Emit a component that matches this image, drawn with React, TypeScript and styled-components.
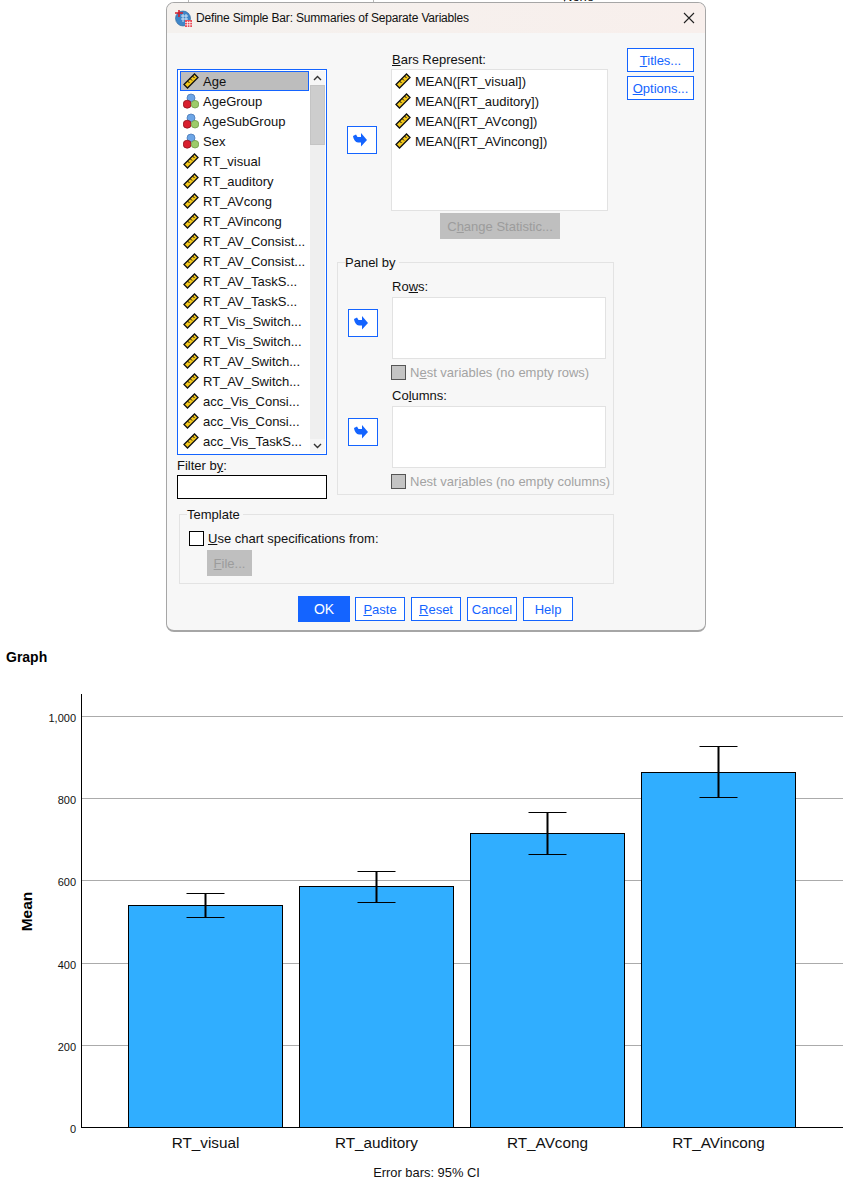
import React from "react";
import styled, { createGlobalStyle } from "styled-components";

const BLUE = "#1464ff";

const GlobalStyle = createGlobalStyle`
  * { box-sizing: border-box; }
  html, body { margin: 0; padding: 0; background: #fff; }
  body {
    font-family: "Liberation Sans", Arial, sans-serif;
    font-size: 13px;
    line-height: 15px;
    color: #111;
  }
`;

const Page = styled.div`
  width: 844px;
  height: 1186px;
  overflow: hidden;
`;

// the sliver of the output window that shows above the dialog
const Backdrop = styled.div`
  display: flex;
  height: 2px;
  overflow: hidden;
`;

const BackdropCell = styled.div<{ $width: number }>`
  width: ${(p) => p.$width}px;
  height: 2px;
  border-right: 1px solid #b8b8b8;
`;

const Peek = styled.span`
  display: block;
  margin: -10px 0 0 -2px;
  font-size: 13px;
  line-height: 13px;
`;

const Dialog = styled.div`
  width: 540px;
  height: 630px;
  margin-left: 166px;
  background: #f7f7f7;
  border: 1px solid #a6a6a6;
  border-bottom-width: 2px;
  border-radius: 8px;
  overflow: hidden;
`;

const TitleBar = styled.div`
  display: flex;
  align-items: center;
  height: 30px;
  padding: 0 10px 0 8px;
  background: linear-gradient(90deg, #f4f1ee, #f8efec);
`;

const TitleText = styled.span`
  flex: 1;
  margin-left: 4px;
  font-size: 12px;
  letter-spacing: -0.18px;
`;

const Body = styled.div`
  padding: 19px 0 0 10px;
`;

const Columns = styled.div`
  display: flex;
  height: 447px;
`;

const LeftColumn = styled.div`
  width: 150px;
  padding-top: 17px;
`;

const CenterColumn = styled.div`
  width: 277px;
  margin-left: 10px;
`;

const RightColumn = styled.div`
  display: flex;
  flex-direction: column;
  gap: 4px;
  width: 67px;
  margin: -4px 0 0 13px;
`;

const VariableBox = styled.div`
  display: flex;
  height: 386px;
  padding: 1px 1px 1px 2px;
  background: #fff;
  border: 1px solid ${BLUE};
`;

const VariableRows = styled.div`
  width: 129px;
`;

const Row = styled.div<{ $selected?: boolean }>`
  display: flex;
  align-items: center;
  gap: 4px;
  height: 20px;
  padding-left: 3px;
  white-space: nowrap;
  background: ${(p) => (p.$selected ? "#bdbdbd" : "transparent")};
  outline: ${(p) => (p.$selected ? `1px solid ${BLUE}` : "none")};
  outline-offset: -1px;
`;

const Scrollbar = styled.div`
  display: flex;
  flex-direction: column;
  width: 15px;
  margin-left: 1px;
  background: #efefef;
`;

const ScrollButton = styled.div`
  display: flex;
  align-items: center;
  justify-content: center;
  height: 14px;
  background: #f6f6f6;
`;

const ScrollThumb = styled.div`
  height: 60px;
  background: #cdcdcd;
  border: 1px solid #c4c4c4;
`;

const ScrollTrack = styled.div`
  flex: 1;
`;

const FilterLabel = styled.div`
  margin-top: 3px;
`;

const FilterInput = styled.div`
  height: 24px;
  margin-top: 2px;
  background: #fff;
  border: 1px solid #000;
`;

const UpperRow = styled.div`
  display: flex;
  padding-left: 10px;
`;

const ArrowButton = styled.button<{ $top: number }>`
  display: flex;
  align-items: center;
  justify-content: center;
  flex: none;
  width: 30px;
  height: 28px;
  margin-top: ${(p) => p.$top}px;
  padding: 0 4px 0 0;
  background: #fff;
  border: 1px solid ${BLUE};
`;

const BarsField = styled.div`
  width: 217px;
  margin-left: 14px;
`;

const FieldLabel = styled.div`
  height: 15px;
`;

const BarsLabel = styled(FieldLabel)`
  padding-left: 1px;
`;

const BarsList = styled.div`
  height: 142px;
  margin-top: 2px;
  padding-top: 1px;
  background: #fff;
  border: 1px solid #e2e2e2;
`;

const DisabledButton = styled.button<{ $width: number; $height: number }>`
  display: block;
  width: ${(p) => p.$width}px;
  height: ${(p) => p.$height}px;
  padding: 0;
  font: inherit;
  color: #9c9c9c;
  background: #bfbfbf;
  border: none;
`;

const ChangeStatistic = styled(DisabledButton)`
  margin: 2px 0 0 49px;
`;

const Group = styled.fieldset`
  min-width: 0;
  margin: 0;
  border: 1px solid #e3e3e3;
`;

const GroupLegend = styled.legend<{ $inset: number }>`
  padding: 0 3px 0 0;
  margin-left: ${(p) => p.$inset}px;
  line-height: 15px;
`;

const PanelGroup = styled(Group)`
  width: 277px;
  height: 240px;
  margin-top: 16px;
  padding: 9px 0 0 10px;
`;

const PanelRow = styled.div`
  display: flex;
  & + & {
    margin-top: 8px;
  }
`;

const PanelField = styled.div`
  width: 214px;
  margin-left: 14px;
`;

const PanelList = styled.div`
  height: 62px;
  margin-top: 3px;
  background: #fff;
  border: 1px solid #e2e2e2;
`;

const CheckRow = styled.div`
  display: flex;
  align-items: center;
  gap: 4px;
  height: 15px;
  margin: 6px 0 0 -1px;
  color: #a3a3a3;
  white-space: nowrap;
`;

const CheckBox = styled.span<{ $disabled?: boolean }>`
  flex: none;
  width: 15px;
  height: 15px;
  background: ${(p) => (p.$disabled ? "#c4c4c4" : "#fff")};
  border: 1px solid ${(p) => (p.$disabled ? "#555" : "#000")};
`;

const TemplateGroup = styled(Group)`
  width: 435px;
  height: 77px;
  margin: 8px 0 0 2px;
  padding: 8px 0 0 9px;
`;

const TemplateCheck = styled.div`
  display: flex;
  align-items: center;
  gap: 4px;
  height: 16px;
`;

const FileButton = styled(DisabledButton)`
  margin: 4px 0 0 18px;
`;

const Footer = styled.div`
  display: flex;
  align-items: center;
  gap: 6px;
  height: 26px;
  margin: 12px 0 0 121px;
`;

const ActionButton = styled.button<{ $width: number }>`
  width: ${(p) => p.$width}px;
  height: 24px;
  padding: 0;
  font: inherit;
  color: ${BLUE};
  background: #fff;
  border: 1px solid ${BLUE};
`;

const OkButton = styled(ActionButton)`
  height: 26px;
  margin-right: -1px;
  font-size: 14px;
  color: #fff;
  background: ${BLUE};
`;

const Heading = styled.h2`
  margin: 18px 0 15px 6px;
  font-size: 14px;
  font-weight: 700;
  line-height: 15px;
  color: #000;
`;

const ChartSvg = styled.svg`
  display: block;
`;

const RulerIcon = () => (
  <svg width="16" height="16" viewBox="0 0 16 16" style={{ flex: "none" }}>
    <path d="M1 11.5 11.5 1 15 4.5 4.5 15Z" fill="#f2c71c" stroke="#111" strokeWidth="1.3" />
    <path d="M4.5 8 6.5 10M7 5.5 9 7.5M9.5 3 11.5 5" stroke="#111" strokeWidth="1" />
  </svg>
);

const NominalIcon = () => (
  <svg width="16" height="16" viewBox="0 0 16 16" style={{ flex: "none" }}>
    <circle cx="8" cy="5" r="4" fill="#6da5e6" stroke="#4a7ab8" strokeWidth="0.8" />
    <circle cx="4.2" cy="11.2" r="4" fill="#d81f2e" stroke="#8e1520" strokeWidth="0.8" />
    <circle cx="12" cy="11.2" r="3.8" fill="#9ccb6a" stroke="#6f9a48" strokeWidth="0.8" />
  </svg>
);

const ArrowIcon = () => (
  <svg width="14" height="14" viewBox="0 0 14 14">
    <path d="M0 3 3 1.5 4.5 4H8V0L14 7 8 13.5V9.5H5C2.5 9.5 .5 6.5 0 3Z" fill={BLUE} />
  </svg>
);

const AppIcon = () => (
  <svg width="17" height="17" viewBox="0 0 17 17" style={{ flex: "none" }}>
    <circle cx="8" cy="8.5" r="7.5" fill="#3f86c8" stroke="#2a5f96" strokeWidth="0.6" />
    <path d="M6 6H13M6 9H13M8 4V12M11 4V12" stroke="#cfe3f5" strokeWidth="1" />
    <path d="M4 0V7M0 3H8" stroke="#d3202c" strokeWidth="1.6" />
    <rect x="10" y="10" width="7" height="7" fill="#e8505c" />
    <path d="M10 12.5H17M10 14.8H17M12.5 11V17M14.8 11V17" stroke="#fff" strokeWidth="0.7" />
  </svg>
);

const CloseIcon = () => (
  <svg width="12" height="12" viewBox="0 0 12 12">
    <path d="M1 1 11 11M11 1 1 11" stroke="#222" strokeWidth="1.1" />
  </svg>
);

const Chevron = ({ d }: { d: string }) => (
  <svg width="9" height="6" viewBox="0 0 9 6">
    <path d={d} fill="none" stroke="#333" strokeWidth="1.4" />
  </svg>
);

const variables: [string, boolean][] = [
  ["Age", false],
  ["AgeGroup", true],
  ["AgeSubGroup", true],
  ["Sex", true],
  ["RT_visual", false],
  ["RT_auditory", false],
  ["RT_AVcong", false],
  ["RT_AVincong", false],
  ["RT_AV_Consist...", false],
  ["RT_AV_Consist...", false],
  ["RT_AV_TaskS...", false],
  ["RT_AV_TaskS...", false],
  ["RT_Vis_Switch...", false],
  ["RT_Vis_Switch...", false],
  ["RT_AV_Switch...", false],
  ["RT_AV_Switch...", false],
  ["acc_Vis_Consi...", false],
  ["acc_Vis_Consi...", false],
  ["acc_Vis_TaskS...", false],
];

const bars = ["MEAN([RT_visual])", "MEAN([RT_auditory])", "MEAN([RT_AVcong])", "MEAN([RT_AVincong])"];

const chartBars = [
  { label: "RT_visual", x: 128.5, top: 905.5, hi: 893.5, lo: 917.5 },
  { label: "RT_auditory", x: 299.5, top: 886.5, hi: 871.5, lo: 902.5 },
  { label: "RT_AVcong", x: 470.5, top: 833.5, hi: 812.5, lo: 854.5 },
  { label: "RT_AVincong", x: 641.5, top: 772.5, hi: 746.5, lo: 797.5 },
];

const ticks = [
  { label: "1,000", y: 716.5 },
  { label: "800", y: 798.5 },
  { label: "600", y: 880.5 },
  { label: "400", y: 963.5 },
  { label: "200", y: 1045.5 },
];

const Chart = () => (
  <ChartSvg width="844" height="506" viewBox="0 680 844 506" fontFamily="Liberation Sans, Arial, sans-serif">
    {ticks.map((t) => (
      <g key={t.label}>
        <line x1="81" x2="843" y1={t.y} y2={t.y} stroke="#ababab" />
        <text x="76" y={t.y + 5.5} fontSize="11" textAnchor="end" fill="#111">
          {t.label}
        </text>
      </g>
    ))}
    <text x="76" y="1133" fontSize="11" textAnchor="end" fill="#111">
      0
    </text>
    {chartBars.map((b) => {
      const mid = b.x + 77;
      return (
        <g key={b.label}>
          <rect x={b.x} y={b.top} width="154" height={1127.5 - b.top} fill="#30aeff" stroke="#000" />
          <line x1={mid} x2={mid} y1={b.hi} y2={b.lo} stroke="#000" strokeWidth="2" />
          <line x1={mid - 19} x2={mid + 19} y1={b.hi} y2={b.hi} stroke="#000" />
          <line x1={mid - 19} x2={mid + 19} y1={b.lo} y2={b.lo} stroke="#000" />
          <text x={mid} y="1148" fontSize="15.3" textAnchor="middle" fill="#111">
            {b.label}
          </text>
        </g>
      );
    })}
    <line x1="81.5" x2="81.5" y1="694" y2="1128" stroke="#000" />
    <line x1="81" x2="843" y1="1127.5" y2="1127.5" stroke="#000" />
    <text
      transform="translate(32 911.5) rotate(-90)"
      fontSize="15.5"
      fontWeight="700"
      textAnchor="middle"
      fill="#000"
    >
      Mean
    </text>
    <text x="426.5" y="1177" fontSize="12.9" textAnchor="middle" fill="#111">
      Error bars: 95% CI
    </text>
  </ChartSvg>
);

const App: React.FC = () => {
  return (
    <Page>
      <GlobalStyle />
      <Backdrop>
        <BackdropCell $width={189} />
        <BackdropCell $width={185} />
        <BackdropCell $width={191} />
        <div>
          <Peek>None</Peek>
        </div>
      </Backdrop>
      <Dialog>
        <TitleBar>
          <AppIcon />
          <TitleText>Define Simple Bar: Summaries of Separate Variables</TitleText>
          <CloseIcon />
        </TitleBar>
        <Body>
          <Columns>
            <LeftColumn>
              <VariableBox>
                <VariableRows>
                  {variables.map(([name, nominal], i) => (
                    <Row key={`${name}-${i}`} $selected={i === 0}>
                      {nominal ? <NominalIcon /> : <RulerIcon />}
                      {name}
                    </Row>
                  ))}
                </VariableRows>
                <Scrollbar>
                  <ScrollButton>
                    <Chevron d="M1 5 4.5 1.5 8 5" />
                  </ScrollButton>
                  <ScrollThumb />
                  <ScrollTrack />
                  <ScrollButton>
                    <Chevron d="M1 1 4.5 4.5 8 1" />
                  </ScrollButton>
                </Scrollbar>
              </VariableBox>
              <FilterLabel>
                Filter b<u>y</u>:
              </FilterLabel>
              <FilterInput />
            </LeftColumn>

            <CenterColumn>
              <UpperRow>
                <ArrowButton $top={74}>
                  <ArrowIcon />
                </ArrowButton>
                <BarsField>
                  <BarsLabel>
                    <u>B</u>ars Represent:
                  </BarsLabel>
                  <BarsList>
                    {bars.map((b) => (
                      <Row key={b}>
                        <RulerIcon />
                        {b}
                      </Row>
                    ))}
                  </BarsList>
                  <ChangeStatistic $width={120} $height={26}>
                    C<u>h</u>ange Statistic...
                  </ChangeStatistic>
                </BarsField>
              </UpperRow>

              <PanelGroup>
                <GroupLegend $inset={-3}>Panel by</GroupLegend>
                <PanelRow>
                  <ArrowButton $top={30}>
                    <ArrowIcon />
                  </ArrowButton>
                  <PanelField>
                    <FieldLabel>
                      Ro<u>w</u>s:
                    </FieldLabel>
                    <PanelList />
                    <CheckRow>
                      <CheckBox $disabled />
                      <span>
                        N<u>e</u>st variables (no empty rows)
                      </span>
                    </CheckRow>
                  </PanelField>
                </PanelRow>
                <PanelRow>
                  <ArrowButton $top={30}>
                    <ArrowIcon />
                  </ArrowButton>
                  <PanelField>
                    <FieldLabel>
                      Co<u>l</u>umns:
                    </FieldLabel>
                    <PanelList />
                    <CheckRow>
                      <CheckBox $disabled />
                      <span>
                        Nest var<u>i</u>ables (no empty columns)
                      </span>
                    </CheckRow>
                  </PanelField>
                </PanelRow>
              </PanelGroup>
            </CenterColumn>

            <RightColumn>
              <ActionButton $width={67}>
                <u>T</u>itles...
              </ActionButton>
              <ActionButton $width={67}>
                <u>O</u>ptions...
              </ActionButton>
            </RightColumn>
          </Columns>

          <TemplateGroup>
            <GroupLegend $inset={-2}>Template</GroupLegend>
            <TemplateCheck>
              <CheckBox />
              <span>
                <u>U</u>se chart specifications from:
              </span>
            </TemplateCheck>
            <FileButton $width={45} $height={26}>
              <u>F</u>ile...
            </FileButton>
          </TemplateGroup>

          <Footer>
            <OkButton $width={52}>OK</OkButton>
            <ActionButton $width={50}>
              <u>P</u>aste
            </ActionButton>
            <ActionButton $width={50}>
              <u>R</u>eset
            </ActionButton>
            <ActionButton $width={50}>Cancel</ActionButton>
            <ActionButton $width={50}>Help</ActionButton>
          </Footer>
        </Body>
      </Dialog>
      <Heading>Graph</Heading>
      <Chart />
    </Page>
  );
};

export default App;
